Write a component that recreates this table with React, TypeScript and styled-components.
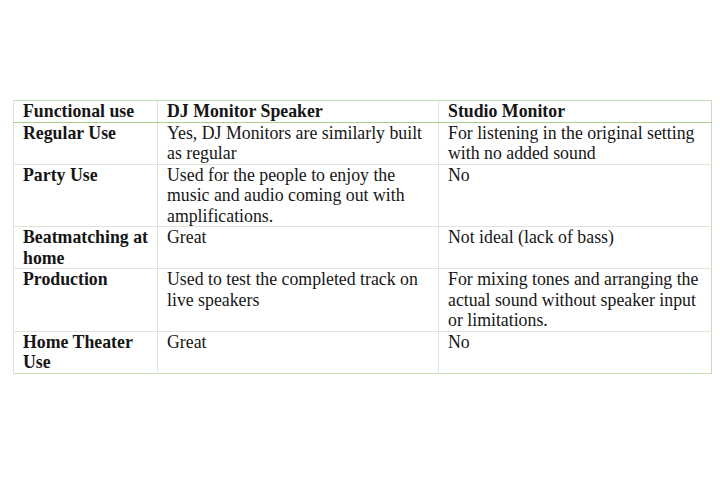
import React from 'react';
import styled, { createGlobalStyle } from 'styled-components';

const GlobalStyle = createGlobalStyle`
    html, body {
        margin: 0;
        padding: 0;
        background: #ffffff;
    }
    body {
        font-family: "Liberation Serif", "Times New Roman", serif;
        color: #161616;
    }
`;

const Page = styled.div`
    width: 720px;
    height: 478px;
    padding: 100px 0 0 13px;
    box-sizing: border-box;
`;

const Table = styled.table`
    width: 698px;
    border-collapse: collapse;
    table-layout: fixed;
    border: 1px solid #c5dfb4;
    font-size: 17.8px;
    line-height: 20.5px;
`;

const HeadCell = styled.th`
    text-align: left;
    font-weight: bold;
    vertical-align: top;
    padding: 0 7px 0 9px;
    border-left: 1px solid #dde4d8;
    border-bottom: 1px solid #a9cf90;
`;

interface CellProps {
    $label?: boolean;
}

const Cell = styled.td<CellProps>`
    vertical-align: top;
    padding: 0 7px 0 9px;
    font-weight: ${(p) => (p.$label ? 'bold' : 'normal')};
    border-left: 1px solid #dde4d8;
    border-top: 1px solid #dde4d8;
`;

type Row = [string, string, string];

const rows: Row[] = [
    ['Regular Use', 'Yes, DJ Monitors are similarly built as regular', 'For listening in the original setting with no added sound'],
    ['Party Use', 'Used for the people to enjoy the music and audio coming out with amplifications.', 'No'],
    ['Beatmatching at home', 'Great', 'Not ideal (lack of bass)'],
    ['Production', 'Used to test the completed track on live speakers', 'For mixing tones and arranging the actual sound without speaker input or limitations.'],
    ['Home Theater Use', 'Great', 'No'],
];

const App = () => {
    return (
        <>
            <GlobalStyle />
            <Page>
                <Table>
                    <colgroup>
                        <col style={{ width: 144 }} />
                        <col style={{ width: 281 }} />
                        <col style={{ width: 273 }} />
                    </colgroup>
                    <thead>
                        <tr>
                            <HeadCell>Functional use</HeadCell>
                            <HeadCell>DJ Monitor Speaker</HeadCell>
                            <HeadCell>Studio Monitor</HeadCell>
                        </tr>
                    </thead>
                    <tbody>
                        {rows.map((row) => (
                            <tr key={row[0]}>
                                <Cell $label>{row[0]}</Cell>
                                <Cell>{row[1]}</Cell>
                                <Cell>{row[2]}</Cell>
                            </tr>
                        ))}
                    </tbody>
                </Table>
            </Page>
        </>
    );
};

export default App;
